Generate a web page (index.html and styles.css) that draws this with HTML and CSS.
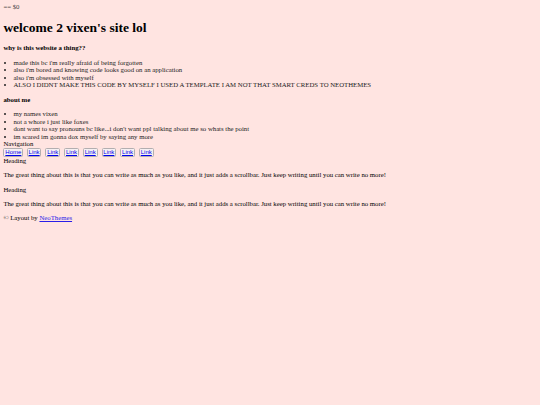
FILE: index.html
```html
<!DOCTYPE html>
<html>
<head>
<meta charset="utf-8">
<link rel="stylesheet" href="styles.css">
</head>
<body>
<div class="marker">== $0</div>
<h1 class="title">welcome 2 vixen's site lol</h1>
<p class="sub">why is this website a thing??</p>
<ul class="list">
<li>made this bc i'm really afraid of being forgotten</li>
<li>also i'm bored and knowing code looks good on an application</li>
<li>also i'm obsessed with myself</li>
<li>ALSO I DIDNT MAKE THIS CODE BY MYSELF I USED A TEMPLATE I AM NOT THAT SMART CREDS TO NEOTHEMES</li>
</ul>
<p class="sub">about me</p>
<ul class="list last">
<li>my names vixen</li>
<li>not a whore i just like foxes</li>
<li>dont want to say pronouns bc like...i don't want ppl talking about me so whats the point</li>
<li>im scared im gonna dox myself by saying any more</li>
</ul>
<div class="line">Navigation</div>
<div class="nav">
<button class="btn home"><a href="#">Home</a></button>
<button class="btn"><a href="#">Link</a></button>
<button class="btn"><a href="#">Link</a></button>
<button class="btn"><a href="#">Link</a></button>
<button class="btn"><a href="#">Link</a></button>
<button class="btn"><a href="#">Link</a></button>
<button class="btn"><a href="#">Link</a></button>
<button class="btn"><a href="#">Link</a></button>
</div>
<div class="line">Heading</div>
<p class="text">The great thing about this is that you can write as much as you like, and it just adds a scrollbar. Just keep writing until you can write no more!</p>
<div class="line">Heading</div>
<p class="text">The great thing about this is that you can write as much as you like, and it just adds a scrollbar. Just keep writing until you can write no more!</p>
<p class="text footer">&copy; Layout by <a href="#">NeoThemes</a></p>
</body>
</html>
```
FILE: styles.css
```css
html {
  background: #ffe4e1;
}
body {
  margin: 3.2px 3.375px;
  font-family: "Liberation Serif", "Times New Roman", serif;
  font-size: 6.75px;
  line-height: 7.6px;
  color: #000;
}
.marker {
  color: #444;
}
.title {
  font-size: 13.5px;
  line-height: 15.4px;
  font-weight: bold;
  margin: 9px 0;
}
.sub {
  font-weight: bold;
  margin: 6.75px 0;
}
.list {
  margin: 6.75px 0;
  padding-left: 10px;
  list-style: none;
}
.list li {
  position: relative;
  color: #1a1a1a;
  line-height: 7.6px;
}
.list li::before {
  content: "";
  position: absolute;
  left: -9px;
  top: 3px;
  width: 2px;
  height: 2px;
  border-radius: 50%;
  background: #222;
}
.list.last {
  margin-bottom: 0;
}
.nav {
  display: flex;
  gap: 4px;
  height: 9px;
}
.btn {
  box-sizing: border-box;
  width: 14.7px;
  height: 9px;
  padding: 0;
  margin: 0;
  border: 1px solid #b2aeb0;
  border-radius: 1.5px;
  background: #f5eff1;
  font-family: "Liberation Sans", Arial, sans-serif;
  font-size: 6px;
  line-height: 7px;
  display: flex;
  align-items: center;
  justify-content: center;
}
.btn.home {
  width: 20px;
  margin-right: -0.6px;
}
.btn a {
  color: #0000ee;
}
.text {
  margin: 6.75px 0;
}
.footer a {
  color: #2a1ee8;
}
```
